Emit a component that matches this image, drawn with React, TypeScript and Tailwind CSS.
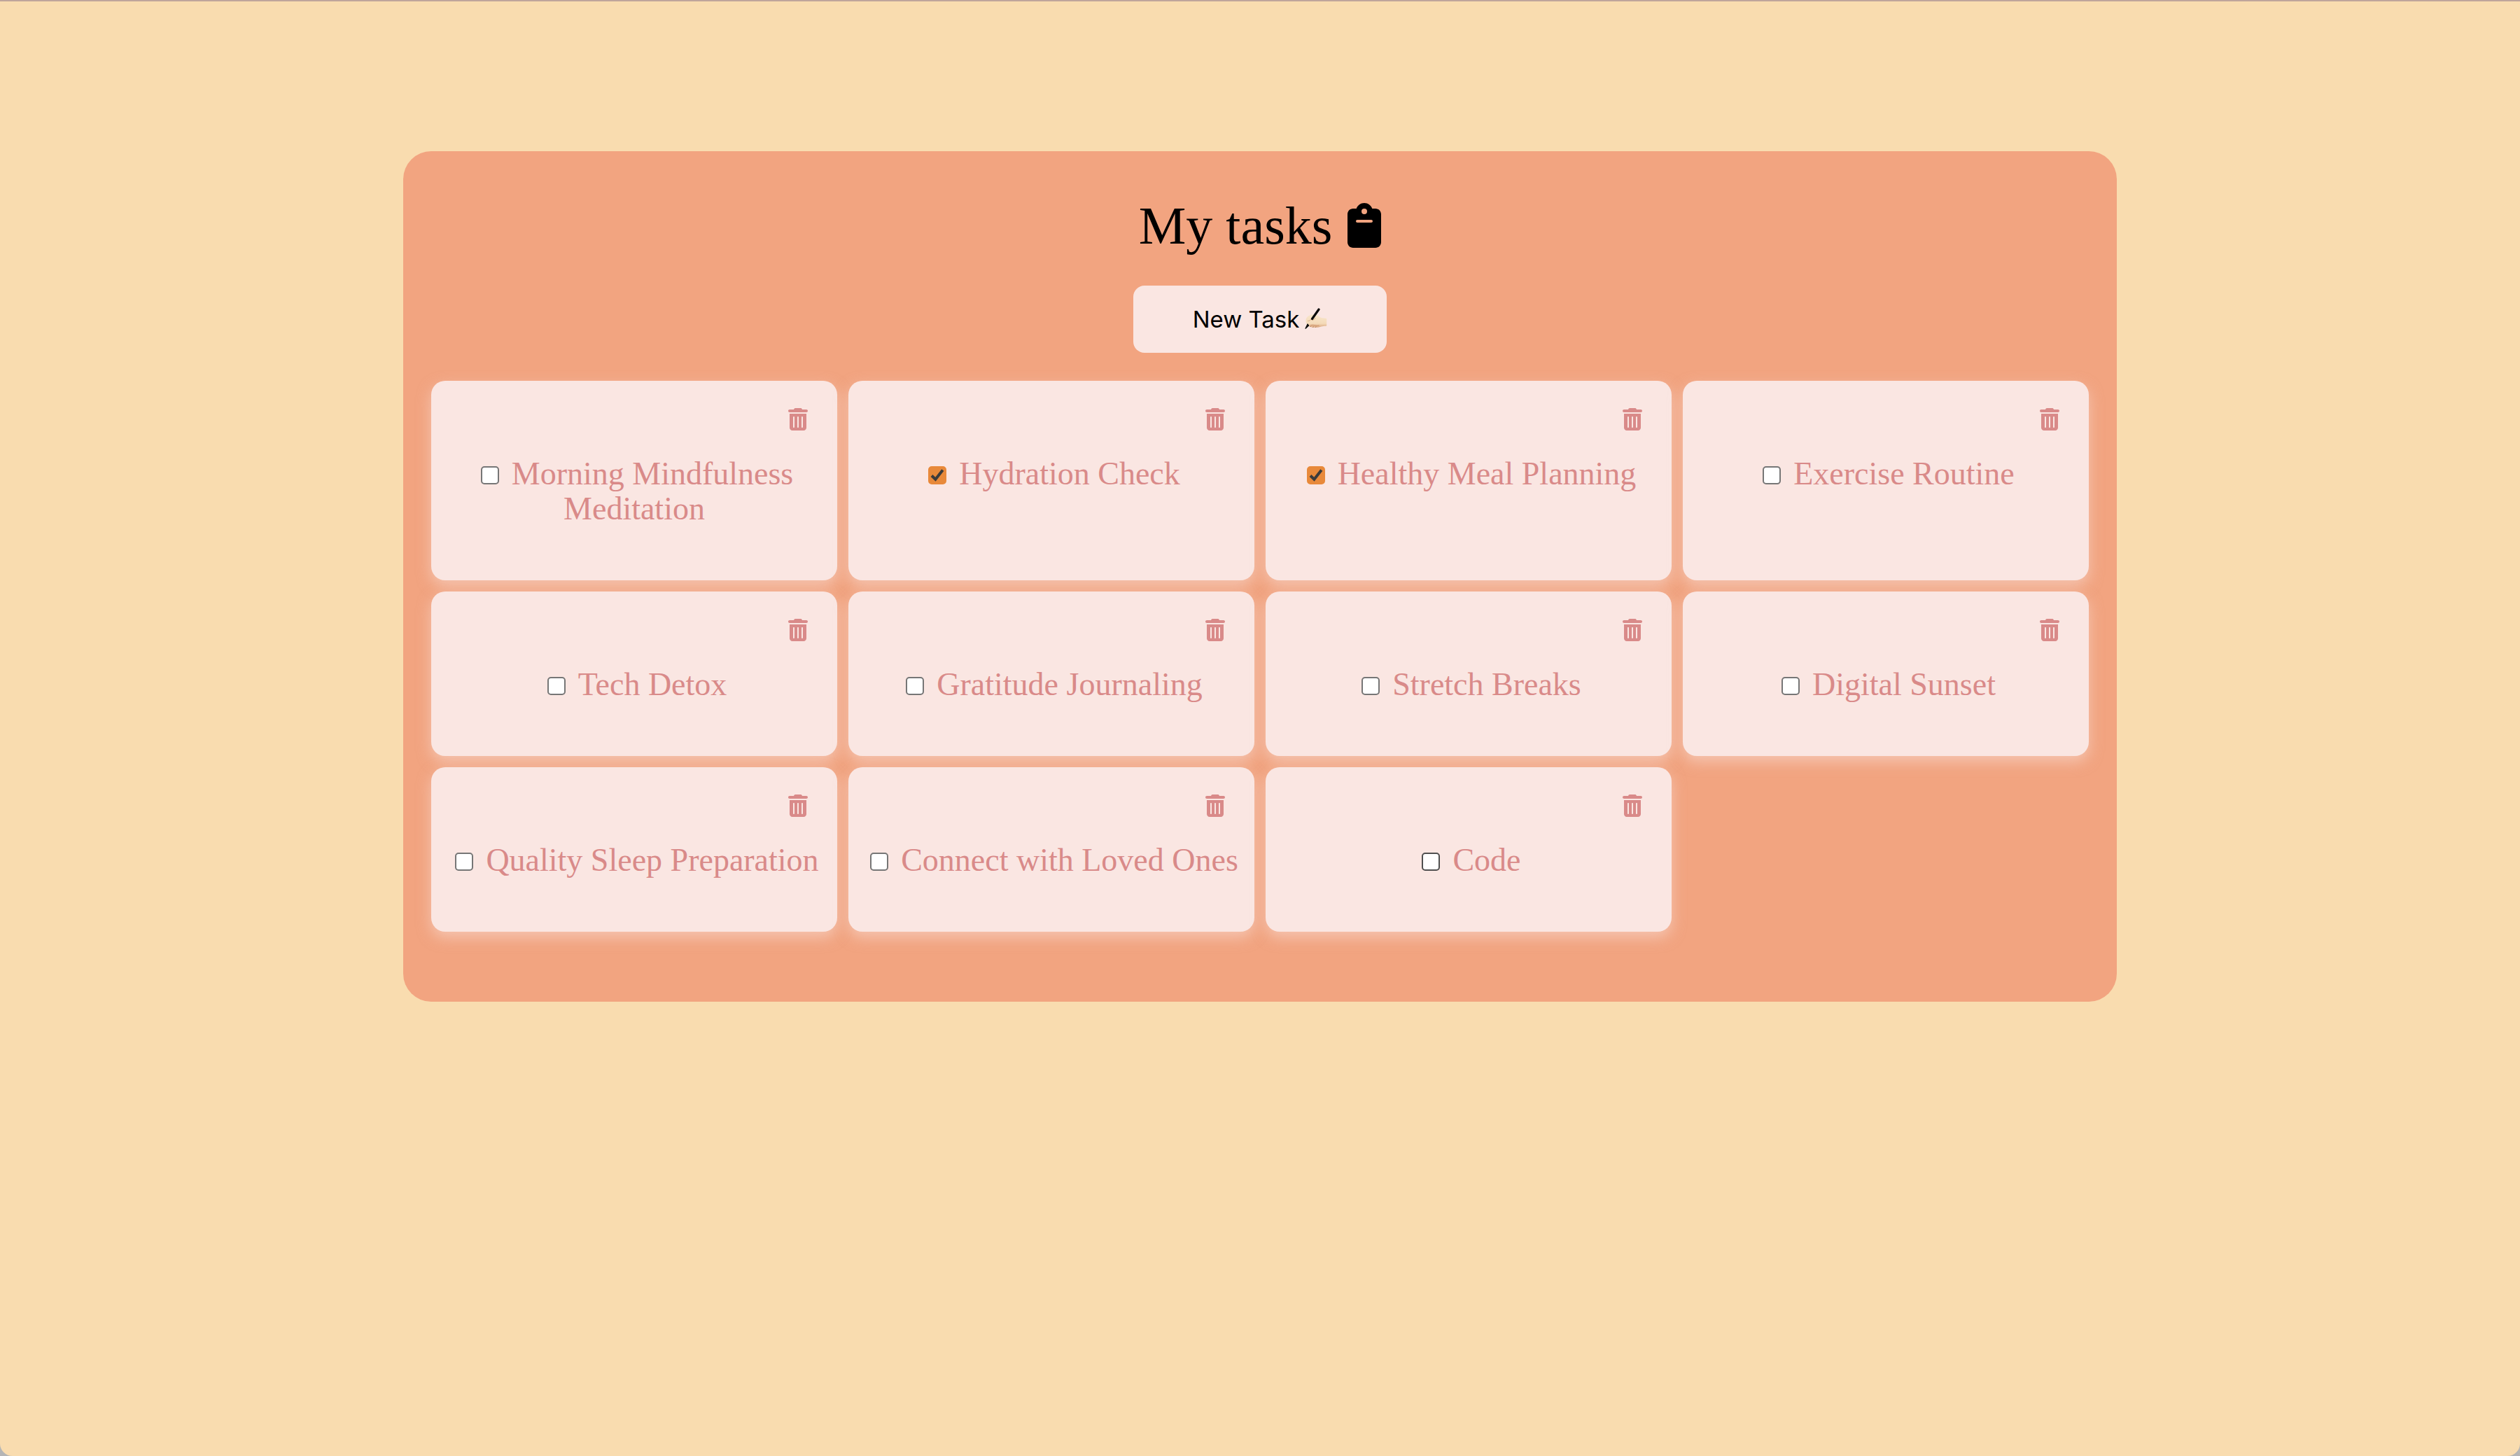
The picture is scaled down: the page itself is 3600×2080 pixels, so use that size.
import { useState } from "react";
import { FaClipboard, FaTrashCan } from "react-icons/fa6";

type Task = { id: number; title: string; done: boolean; focused?: boolean };

const initialTasks: Task[] = [
  { id: 1, title: "Morning Mindfulness Meditation", done: false },
  { id: 2, title: "Hydration Check", done: true },
  { id: 3, title: "Healthy Meal Planning", done: true },
  { id: 4, title: "Exercise Routine", done: false },
  { id: 5, title: "Tech Detox", done: false },
  { id: 6, title: "Gratitude Journaling", done: false },
  { id: 7, title: "Stretch Breaks", done: false },
  { id: 8, title: "Digital Sunset", done: false },
  { id: 9, title: "Quality Sleep Preparation", done: false },
  { id: 10, title: "Connect with Loved Ones", done: false },
  { id: 11, title: "Code", done: false, focused: true },
];

function WritingHand() {
  return (
    <svg viewBox="0 0 32 32" className="size-8" aria-hidden="true">
      <defs>
        <linearGradient id="skin" x1="0" y1="0" x2="0" y2="1">
          <stop offset="0" stopColor="#f8e6cb" />
          <stop offset="0.7" stopColor="#f4dab8" />
          <stop offset="1" stopColor="#d9a67e" />
        </linearGradient>
      </defs>
      <path
        d="M1.500 17c.3-3 2.300-5.200 5-6.300 2-.9 4-1.400 6.500-1.400 3 0 5.500 1.300 8 3.200 2.500 1.900 5 2.200 9 2.200.7 0 1.200.4 1.200 1v9c0 .7-.5 1-1.200 1-2.500.1-4.500.2-6.500.9-2.500.9-5.500 1.300-8.500 1.200-3.500 0-6.500-.5-8.600-1.900C3.500 24.300 1 21 1.500 17z"
        fill="url(#skin)"
      />
      <path d="M8 24.800c2.500-.9 5.500-.3 8.500.3 1.500.3 3 .2 4-.2" fill="none" stroke="#d39c74" strokeWidth="1.200" />
      <path d="M7.500 27l1-1.300M11.500 27.800l.9-1.400M15.300 27.800l.8-1.300" stroke="#b3744d" strokeWidth="1" />
      <path d="M4 18.500c2 .3 4-1 5.500-3M10.500 17.500c1.800-.3 3.500-1.500 5-3.500" fill="none" stroke="#dcae85" strokeWidth="1" />
      <path d="M20 2L10.500 15.500" stroke="#0b0b0b" strokeWidth="3.200" strokeLinecap="round" />
      <path d="M4 23L1 29.300l4.600-4.300z" fill="#0b0b0b" stroke="#0b0b0b" strokeWidth="1.200" strokeLinejoin="round" />
    </svg>
  );
}

function TaskCard({ task, onToggle, onDelete }: { task: Task; onToggle: () => void; onDelete: () => void }) {
  const inputId = `task-${task.id}`;
  return (
    <li className="flex flex-col rounded-[20px] bg-[#fae6e2] px-5 pt-6 pb-[77px] shadow-[0_8px_20px_rgba(250,230,226,0.5)]">
      <button
        type="button"
        aria-label={`Delete ${task.title}`}
        onClick={onDelete}
        className="mb-[22px] self-end px-[22px] py-[15px] text-[32px] text-[#d98a89]"
      >
        <FaTrashCan className="h-8 w-7" />
      </button>
      <div className="text-center font-['Liberation_Serif',serif] text-[46px] leading-[50px] text-[#d98a89]">
        <span className="relative mr-[18px] ml-2 inline-block size-[26px] align-baseline">
          <input
            id={inputId}
            type="checkbox"
            checked={task.done}
            onChange={onToggle}
            className={`peer block size-[26px] appearance-none rounded-[5px] border-2 bg-white checked:border-[#e8893a] checked:bg-[#e8893a] ${
              task.focused ? "border-[#4f4f4f]" : "border-[#767676]"
            }`}
          />
          <svg
            viewBox="0 0 26 26"
            aria-hidden="true"
            className="pointer-events-none absolute inset-0 hidden size-[26px] peer-checked:block"
          >
            <path d="M5 13.500l5.400 5.200L20.800 5.500" fill="none" stroke="#3b3b3b" strokeWidth="4" />
          </svg>
        </span>
        <label htmlFor={inputId}>{task.title}</label>
      </div>
    </li>
  );
}

export default function App() {
  const [tasks, setTasks] = useState<Task[]>(initialTasks);

  const toggle = (id: number) => setTasks(tasks.map((t) => (t.id === id ? { ...t, done: !t.done } : t)));
  const remove = (id: number) => setTasks(tasks.filter((t) => t.id !== id));

  return (
    <div className="flex min-h-screen bg-[#b5b5b5]">
      <div className="w-full rounded-b-[18px] border-t-2 border-[#bfa59b] bg-[#f9dcaf] pt-[214px]">
        <main className="mx-auto flex w-[68%] flex-col items-center rounded-[40px] bg-[#f2a480] px-10 pt-[58px] pb-[100px]">
          <h1 className="flex items-center gap-[22px] font-['Liberation_Serif',serif] text-[76px] leading-[96px] text-black">
            My tasks
            <FaClipboard className="h-16 w-12" />
          </h1>
          <button
            type="button"
            className="mt-[38px] flex h-24 items-center gap-2 rounded-2xl bg-[#fae6e2] px-[85px] font-[Inter,sans-serif] text-[33px] leading-10 text-black"
          >
            New Task
            <WritingHand />
          </button>
          <ul className="mt-10 grid w-full grid-cols-4 gap-4">
            {tasks.map((task) => (
              <TaskCard
                key={task.id}
                task={task}
                onToggle={() => toggle(task.id)}
                onDelete={() => remove(task.id)}
              />
            ))}
          </ul>
        </main>
      </div>
    </div>
  );
}
